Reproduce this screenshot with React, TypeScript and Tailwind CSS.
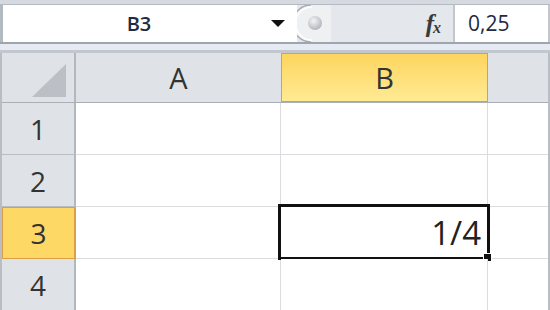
import React from "react";

const font = { fontFamily: '"Open Sans", "Noto Sans", sans-serif' };

const rows = [1, 2, 3, 4];

const FormulaBar = () => (
  <div className="flex h-[53px] flex-col bg-[#d6dae0]">
    <div className="h-[5px] border-b border-[#b4bac2]" />
    <div className="flex h-[37px]">
      <div className="flex w-[297px] items-center border-l-[3px] border-[#b4bac2] bg-white">
        <div className="flex-1 pl-[4px] text-center text-[20px] font-semibold text-[#1f2a44]">B3</div>
        <svg width="14" height="8" viewBox="0 0 14 8" className="mr-[12px]">
          <polygon points="0,0 14,0 7,7" fill="#111" />
        </svg>
      </div>
      <div className="relative flex w-[156px] items-center bg-[#e4e7eb]">
        <svg width="34" height="37" viewBox="0 0 34 37" className="shrink-0">
          <defs>
            <radialGradient id="ball" cx="40%" cy="35%" r="70%">
              <stop offset="0%" stopColor="#f4f5f6" />
              <stop offset="60%" stopColor="#c9ccd1" />
              <stop offset="100%" stopColor="#aeb2b8" />
            </radialGradient>
          </defs>
          <path d="M14 0 A 18 18 0 0 0 14 37 L 34 37 L 34 0 Z" fill="#eef0f2" />
          <path d="M14 0 A 18 18 0 0 0 14 37" fill="none" stroke="#a7acb3" strokeWidth="1.5" />
          <path d="M15 2 A 16 16 0 0 0 15 35" fill="none" stroke="#ffffff" strokeWidth="1.5" />
          <circle cx="18" cy="18" r="7" fill="url(#ball)" />
        </svg>
        <div className="flex-1" />
        <div
          className="mr-[12px] flex items-end text-[#3a3a3a]"
          style={{ fontFamily: '"Liberation Serif", serif' }}
        >
          <span className="text-[25px] font-bold italic leading-none">f</span>
          <span className="-ml-[1px] text-[16px] font-bold italic leading-none">x</span>
        </div>
      </div>
      <div className="flex flex-1 items-center border-l-2 border-r-2 border-[#c3c7cd] bg-white pl-[13px] text-[21px] text-[#1f2a44]">
        0,25
      </div>
    </div>
    <div className="h-[2px] bg-[#9fa5ad]" />
    <div className="h-[6px] bg-[#e6eaf2]" />
    <div className="h-[3px] bg-[#c2c7ce]" />
  </div>
);

const Sheet = () => (
  <div className="flex flex-1 flex-col border-l-[2px] border-r-2 border-b-2 border-[#b9bec5]">
    <div className="flex h-[50px] border-b border-[#a9afb7]">
      <div className="flex w-[74px] items-end justify-end border-r-2 border-[#b3b8bf] bg-[#dfe3e8] pb-[5px] pr-[8px]">
        <svg width="34" height="33" viewBox="0 0 34 33">
          <polygon points="0,33 34,33 34,0" fill="#bcc0c6" />
        </svg>
      </div>
      <div className="flex w-[205px] items-center justify-center bg-[#dfe3e8] text-[29px] text-[#333]">A</div>
      <div className="flex w-[207px] items-center justify-center border border-[#dba045] bg-gradient-to-b from-[#fdd55c] to-[#ffea93] text-[29px] text-[#333]">
        B
      </div>
      <div className="flex-1 bg-[#dfe3e8]" />
    </div>
    {rows.map((r) => {
      const sel = r === 3;
      return (
        <div key={r} className="flex h-[52px] shrink-0">
          <div
            className={
              sel
                ? "flex w-[74px] items-center justify-center border border-r-2 border-[#dba045] bg-[#fed865] text-[28px] text-[#333]"
                : "flex w-[74px] items-center justify-center border-b border-r-2 border-b-[#b8bdc4] border-r-[#b3b8bf] bg-[#dfe3e8] text-[28px] text-[#333]"
            }
          >
            {r}
          </div>
          <div className="w-[205px] border-b border-r border-[#dadcdf] bg-white" />
          <div className="relative flex w-[207px] items-center justify-end border-b border-r border-[#dadcdf] bg-white pr-[6px] text-[33px] text-[#222]">
            {sel && (
              <>
                <span>1/4</span>
                <div className="absolute -left-[3px] -top-[3px] -right-[3px] -bottom-[2px] border-[3px] border-[#111]" />
                <div className="absolute -right-[5px] -bottom-[4px] h-[9px] w-[9px] border border-white bg-[#111]" />
              </>
            )}
          </div>
          <div className="flex-1 border-b border-[#dadcdf] bg-white" />
        </div>
      );
    })}
  </div>
);

export default function App() {
  return (
    <div className="flex h-[310px] w-[550px] flex-col overflow-hidden bg-white" style={font}>
      <FormulaBar />
      <Sheet />
    </div>
  );
}
